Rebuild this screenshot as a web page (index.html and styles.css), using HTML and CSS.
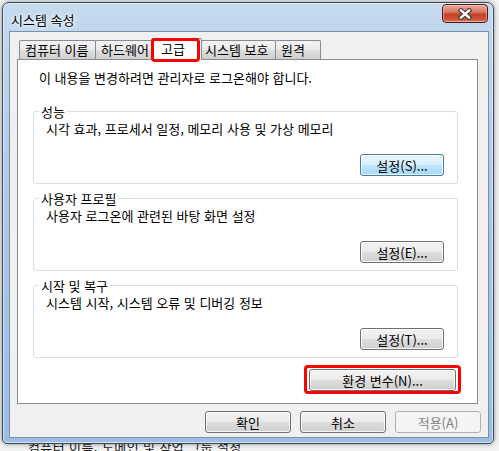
FILE: index.html
```html
<!DOCTYPE html>
<html lang="ko">
<head>
<meta charset="utf-8">
<title>시스템 속성</title>
<link rel="stylesheet" href="styles.css">
</head>
<body>
<div class="desktop">
  <div class="behind-text">컴퓨터 이름, 도메인 및 작업 그룹 설정</div>
  <div class="window">
    <div class="titlebar">
      <span class="title">시스템 속성</span>
      <button class="close" aria-label="닫기">
        <svg width="16" height="12" viewBox="0 0 16 12">
          <path d="M4 2.5 L12 9.5 M12 2.5 L4 9.5" stroke="#3b3b3b" stroke-width="4.6" stroke-linecap="square" fill="none"/>
          <path d="M4 2.5 L12 9.5 M12 2.5 L4 9.5" stroke="#ffffff" stroke-width="2.4" stroke-linecap="square" fill="none"/>
        </svg>
      </button>
    </div>
    <div class="client">
      <div class="tabs">
        <div class="tab tab-name">컴퓨터 이름</div>
        <div class="tab tab-hw">하드웨어</div>
        <div class="tab tab-adv active">고급</div>
        <div class="tab tab-prot">시스템 보호</div>
        <div class="tab tab-remote">원격</div>
      </div>
      <div class="panel">
        <p class="note">이 내용을 변경하려면 관리자로 로그온해야 합니다.</p>
        <fieldset class="group">
          <legend>성능</legend>
          <p class="desc">시각 효과, 프로세서 일정, 메모리 사용 및 가상 메모리</p>
          <div class="group-actions"><button class="btn btn-set btn-hot">설정(S)...</button></div>
        </fieldset>
        <fieldset class="group">
          <legend>사용자 프로필</legend>
          <p class="desc">사용자 로그온에 관련된 바탕 화면 설정</p>
          <div class="group-actions"><button class="btn btn-set">설정(E)...</button></div>
        </fieldset>
        <fieldset class="group">
          <legend>시작 및 복구</legend>
          <p class="desc">시스템 시작, 시스템 오류 및 디버깅 정보</p>
          <div class="group-actions"><button class="btn btn-set">설정(T)...</button></div>
        </fieldset>
        <div class="env-row">
          <button class="btn btn-env marked">환경 변수(N)...</button>
        </div>
      </div>
      <div class="footer">
        <button class="btn btn-foot">확인</button>
        <button class="btn btn-foot">취소</button>
        <button class="btn btn-foot" disabled>적용(A)</button>
      </div>
    </div>
  </div>
</div>
</body>
</html>
```

FILE: styles.css
```css
* { box-sizing: border-box; }

html, body {
  margin: 0;
  padding: 0;
}

body {
  width: 499px;
  height: 451px;
  overflow: hidden;
  background: #f3f3f3;
  font-family: "Noto Sans CJK KR", "Noto Sans", sans-serif;
  font-size: 13px;
  line-height: 15px;
  color: #000;
}

.desktop {
  position: relative;
  width: 499px;
  height: 451px;
}

.behind-text {
  position: absolute;
  left: 28px;
  top: 439px;
  font-size: 13px;
  line-height: 15px;
  color: #1a1a1a;
  letter-spacing: 0.4px;
}

.window {
  position: absolute;
  left: 2px;
  top: 2px;
  width: 492px;
  height: 442px;
  border: 1px solid #3a4a5c;
  border-radius: 7px 7px 5px 5px;
  background: linear-gradient(180deg, #c6daf0 0%, #b7d0eb 25%, #a5c4e7 60%, #9dbee4 100%);
  box-shadow: 0 0 5px rgba(0, 0, 0, 0.45), inset 0 0 0 1px rgba(255, 255, 255, 0.55);
  display: flex;
  flex-direction: column;
}

.titlebar {
  height: 28px;
  display: flex;
  justify-content: space-between;
  align-items: flex-start;
  padding-left: 8px;
  padding-right: 5px;
}

.title {
  margin-top: 9px;
  line-height: 15px;
  text-shadow: 0 0 6px #fff, 0 0 3px #fff;
}

.close {
  margin-top: 1px;
  width: 46px;
  height: 19px;
  padding: 0;
  border: 1px solid #4b1c14;
  border-radius: 4px;
  background: linear-gradient(180deg, #e9a99b 0%, #d87b68 40%, #c4412a 55%, #cd5539 85%, #e0886a 100%);
  box-shadow: inset 0 0 0 1px rgba(255, 220, 210, 0.45);
  display: flex;
  align-items: center;
  justify-content: center;
}

.client {
  margin: 0 4px 5px 6px;
  height: 407px;
  border: 1px solid #7d8fa5;
  background: #f0f0f0;
  display: flex;
  flex-direction: column;
  padding: 6px 10px 4px 7px;
}

.tabs {
  display: flex;
  align-items: flex-end;
  padding-left: 2px;
  margin-bottom: -1px;
  position: relative;
  z-index: 1;
  height: 22px;
}

.tab {
  height: 19px;
  margin-bottom: 1px;
  border: 1px solid #898c95;
  border-bottom: none;
  border-radius: 2px 2px 0 0;
  background: linear-gradient(180deg, #f3f3f3 0%, #ebebeb 45%, #dddddd 55%, #cfcfcf 100%);
  line-height: 17px;
  padding-left: 5px;
  white-space: nowrap;
}

.tab + .tab { margin-left: -1px; }

.tab-name { width: 77px; }
.tab-hw { width: 58px; }
.tab-adv { width: 52px; }
.tab-prot { width: 77px; }
.tab-remote { width: 46px; }

.tab.active {
  position: relative;
  height: 22px;
  margin: 0 -2px;
  width: 51px;
  padding-left: 9px;
  background: #fff;
  line-height: 19px;
  z-index: 2;
}

.tab.active + .tab { margin-left: -1px; }

.tab.active::after,
.marked::after {
  content: "";
  position: absolute;
  border: 3px solid #ff0000;
  border-radius: 4px;
  pointer-events: none;
}

.tab.active::after {
  top: -1px;
  left: -1px;
  right: 1px;
  bottom: -2px;
}

.panel {
  flex: 1;
  background: #fff;
  border: 1px solid #898c95;
  padding: 10px 19px 0 15px;
  display: flex;
  flex-direction: column;
}

.note {
  margin: 0;
  padding-left: 6px;
}

.group {
  margin: 7px 0 0;
  padding: 0 0 7px;
  border: 1px solid #d5dfe5;
  border-radius: 3px;
  min-inline-size: 0;
}

.group:first-of-type { margin-top: 19px; }

.group legend {
  margin-left: 5px;
  padding: 0 2px;
  line-height: 15px;
}

.desc {
  margin: 0;
  padding: 2px 0 0 12px;
}

.group-actions {
  display: flex;
  justify-content: flex-end;
  margin-top: 18px;
  padding-right: 13px;
}

.btn {
  font-family: inherit;
  font-size: 13px;
  line-height: 15px;
  color: #000;
  height: 22px;
  padding: 0;
  border: 1px solid #707070;
  border-radius: 3px;
  background: linear-gradient(180deg, #f2f2f2 0%, #ebebeb 48%, #dddddd 52%, #cfcfcf 100%);
  box-shadow: inset 0 0 0 1px rgba(255, 255, 255, 0.8);
}

.btn-set { width: 84px; }

.btn-hot {
  border-color: #3c7fb1;
  background: linear-gradient(180deg, #eaf6fd 0%, #d9f0fc 48%, #bee6fd 52%, #a7d9f5 100%);
}

.env-row {
  display: flex;
  justify-content: flex-end;
  margin-top: 11px;
  padding-right: 2px;
}

.btn-env {
  width: 147px;
  position: relative;
}

.marked::after {
  top: -5px;
  left: -6px;
  right: -6px;
  bottom: -4px;
}

.footer {
  display: flex;
  justify-content: flex-end;
  gap: 9px;
  margin-top: 7px;
  margin-right: -3px;
}

.btn-foot { width: 86px; }

.btn:disabled {
  color: #838383;
  border-color: #adb2b5;
  background: #f4f4f4;
  box-shadow: none;
}
```
